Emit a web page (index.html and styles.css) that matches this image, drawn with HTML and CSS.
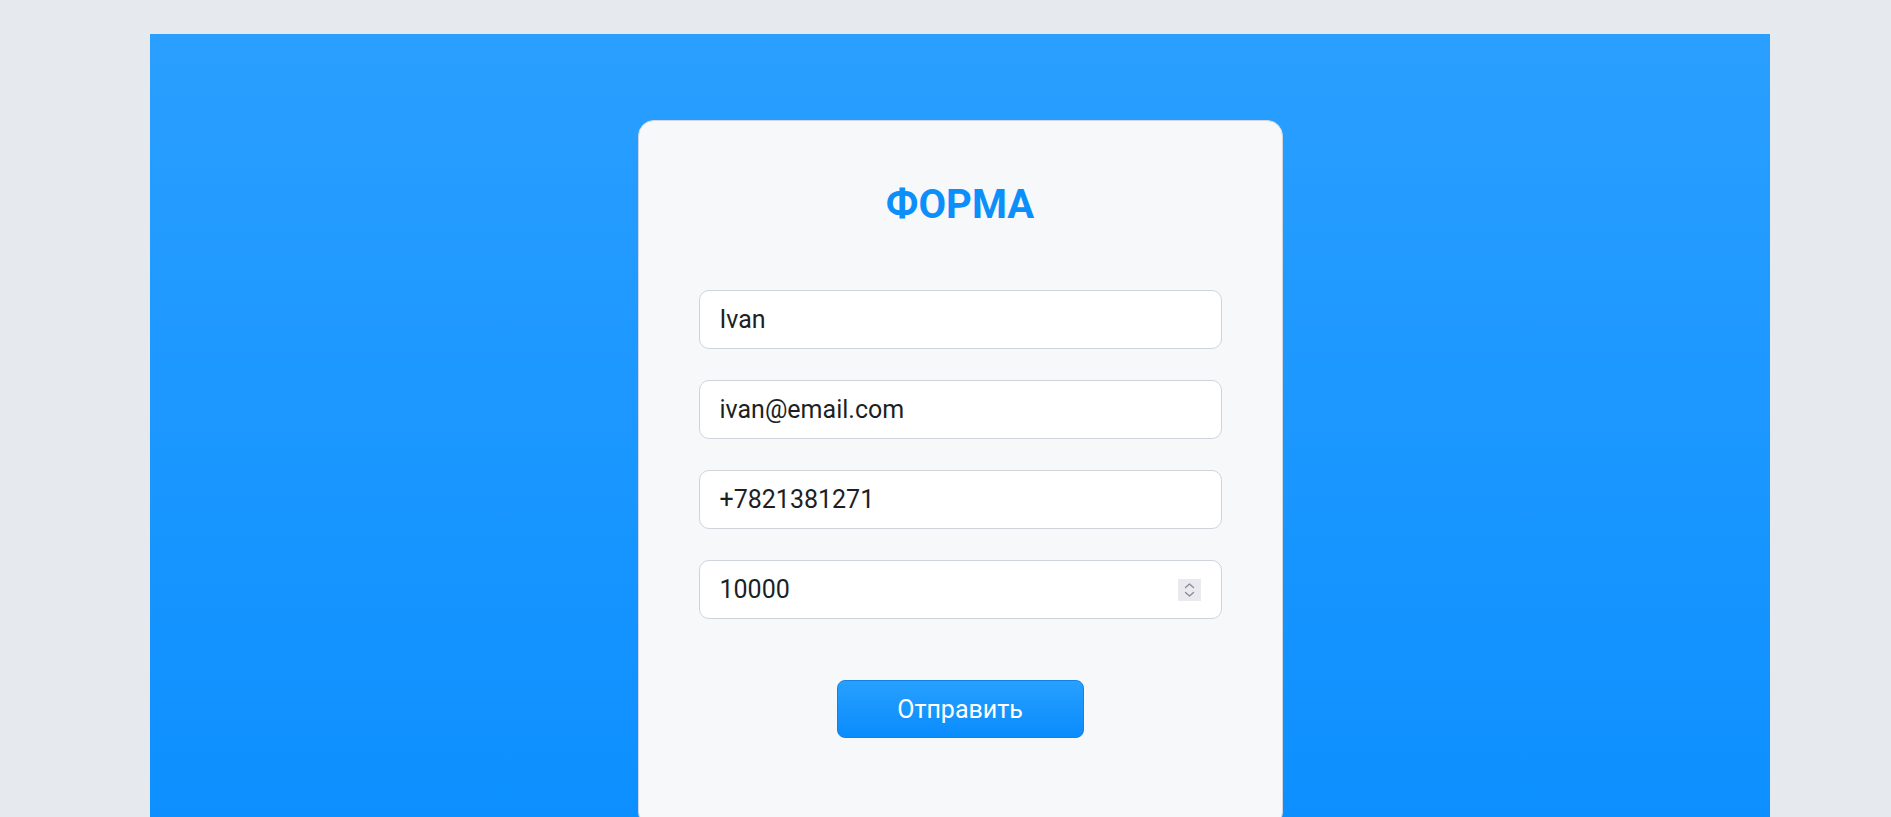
FILE: index.html
```html
<!DOCTYPE html>
<html lang="ru">
<head>
<meta charset="utf-8">
<title>Форма</title>
<link rel="stylesheet" href="styles.css">
</head>
<body>
<section class="hero">
  <form class="card">
    <h1 class="title">ФОРМА</h1>
    <div class="fields">
      <input class="field" type="text" value="Ivan">
      <input class="field" type="email" value="ivan@email.com">
      <input class="field" type="tel" value="+7821381271">
      <div class="number-wrap">
        <input class="field field-number" type="number" value="10000">
        <span class="spinner" aria-hidden="true">
          <svg width="23" height="22" viewBox="0 0 23 22">
            <path d="M7.5 8.5 L11.5 5 L15.5 8.5" fill="none" stroke="#8e8c9e" stroke-width="1.4" stroke-linecap="round" stroke-linejoin="round"/>
            <path d="M7.5 13.5 L11.5 17 L15.5 13.5" fill="none" stroke="#8e8c9e" stroke-width="1.4" stroke-linecap="round" stroke-linejoin="round"/>
          </svg>
        </span>
      </div>
    </div>
    <div class="actions">
      <button class="submit" type="button">Отправить</button>
    </div>
  </form>
</section>
</body>
</html>
```
FILE: styles.css
```css
html, body {
  margin: 0;
  padding: 0;
}
body {
  background: #e6eaee;
  font-family: Roboto, "Liberation Sans", sans-serif;
  overflow: hidden;
}
.hero {
  margin: 34px 0 0 150px;
  width: 1620px;
  min-height: 900px;
  padding-top: 86px;
  box-sizing: border-box;
  background: linear-gradient(180deg, #2a9fff 0%, #0a8eff 95%, #0a8cff 100%);
  display: flex;
  justify-content: center;
  align-items: flex-start;
}
.card {
  width: 645px;
  box-sizing: border-box;
  background: #f7f8fa;
  border: 1px solid #cfd6df;
  border-radius: 16px;
  padding: 60px 60px 100px;
  height: 708px;
}
.title {
  margin: 0;
  text-align: center;
  font-size: 40px;
  font-weight: 700;
  line-height: 48px;
  color: #0d8ff9;
}
.fields {
  margin-top: 61px;
  display: flex;
  flex-direction: column;
  gap: 31px;
}
.field {
  display: block;
  height: 59px;
  box-sizing: border-box;
  width: 100%;
  margin: 0;
  border: 1px solid #cfd4db;
  border-radius: 10px;
  background: #fff;
  padding: 0 20px;
  font-family: Roboto, "Liberation Sans", sans-serif;
  font-size: 25px;
  color: #1d1f24;
  outline: none;
}
.field-number {
  padding-right: 50px;
  -moz-appearance: textfield;
}
.field-number::-webkit-inner-spin-button,
.field-number::-webkit-outer-spin-button {
  -webkit-appearance: none;
  margin: 0;
}
.number-wrap {
  position: relative;
}
.spinner {
  position: absolute;
  right: 21px;
  top: 19px;
  width: 23px;
  height: 22px;
  background: #e9e9ee;
  display: block;
}
.spinner svg {
  display: block;
}
.actions {
  margin-top: 61px;
  display: flex;
  justify-content: center;
}
.submit {
  width: 247px;
  height: 58px;
  border: 1px solid #1382e6;
  border-radius: 8px;
  background: linear-gradient(180deg, #27a0ff 0%, #0a8cfd 100%);
  color: #fff;
  font-family: Roboto, "Liberation Sans", sans-serif;
  font-size: 25px;
  cursor: pointer;
}
```
